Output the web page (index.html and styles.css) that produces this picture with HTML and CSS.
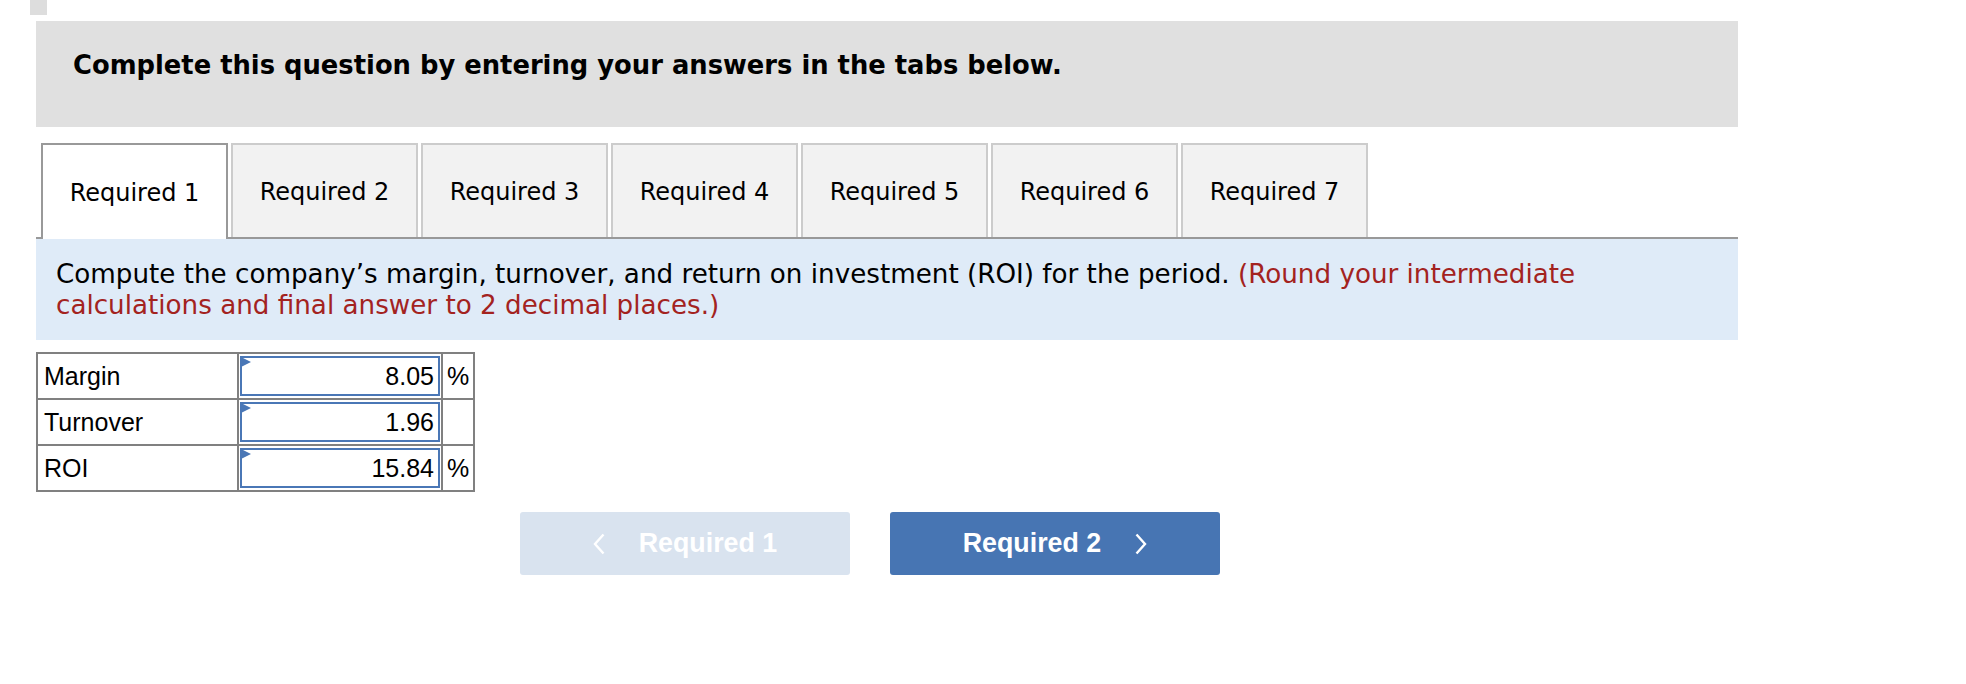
FILE: index.html
```html
<!DOCTYPE html>
<html>
<head>
<meta charset="utf-8">
<link rel="stylesheet" href="styles.css">
</head>
<body>
<div class="corner"></div>
<div class="banner"><h2 class="banner-title">Complete this question by entering your answers in the tabs below.</h2></div>
<div class="tabs">
  <div class="tab active">Required 1</div>
  <div class="tab">Required 2</div>
  <div class="tab">Required 3</div>
  <div class="tab">Required 4</div>
  <div class="tab">Required 5</div>
  <div class="tab">Required 6</div>
  <div class="tab">Required 7</div>
</div>
<div class="prompt">
  <p class="prompt-text">Compute the company’s margin, turnover, and return on investment (ROI) for the period. <span class="hint">(Round your intermediate calculations and final answer to 2 decimal places.)</span></p>
</div>
<table class="answers">
  <tr>
    <td class="label">Margin</td>
    <td class="entry"><div class="field"><span class="flag"></span>8.05</div></td>
    <td class="unit">%</td>
  </tr>
  <tr>
    <td class="label">Turnover</td>
    <td class="entry"><div class="field"><span class="flag"></span>1.96</div></td>
    <td class="unit"></td>
  </tr>
  <tr>
    <td class="label">ROI</td>
    <td class="entry"><div class="field"><span class="flag"></span>15.84</div></td>
    <td class="unit">%</td>
  </tr>
</table>
<div class="nav">
  <div class="btn disabled">
    <svg class="chev" width="12" height="22" viewBox="0 0 12 22"><polyline points="10.5,1.5 2,11 10.5,20.5" fill="none" stroke="#fff" stroke-width="2.4"/></svg>
    <span>Required 1</span>
  </div>
  <div class="btn primary">
    <span>Required 2</span>
    <svg class="chev" width="12" height="22" viewBox="0 0 12 22"><polyline points="1.5,1.5 10,11 1.5,20.5" fill="none" stroke="#fff" stroke-width="2.4"/></svg>
  </div>
</div>
</body>
</html>
```
FILE: styles.css
```css
html, body {
  margin: 0;
  padding: 0;
  background: #ffffff;
}
body {
  width: 1966px;
  height: 684px;
  overflow: hidden;
  font-family: "DejaVu Sans", Verdana, sans-serif;
  color: #000;
}
.corner {
  width: 17px;
  height: 15px;
  margin-left: 30px;
  background: #dddddd;
}
.banner {
  margin: 6px 0 0 36px;
  width: 1702px;
  height: 106px;
  background: #e0e0e0;
  box-sizing: border-box;
  padding: 29px 0 0 37px;
}
.banner-title {
  margin: 0;
  font-size: 25.8px;
  font-weight: bold;
  line-height: 30px;
}
.tabs {
  display: flex;
  gap: 3px;
  margin: 16px 0 0 36px;
  padding-left: 5px;
  width: 1702px;
  box-sizing: border-box;
  border-bottom: 2px solid #999999;
}
.tab {
  width: 187px;
  height: 94px;
  box-sizing: border-box;
  border: 2px solid #cccccc;
  border-bottom: none;
  background: #f2f2f2;
  display: flex;
  align-items: center;
  justify-content: center;
  font-size: 24px;
  padding-top: 1px;
}
.tab.active {
  background: #ffffff;
  border-color: #999999;
  height: 96px;
  margin-bottom: -2px;
}
.prompt {
  margin-left: 36px;
  width: 1702px;
  height: 101px;
  box-sizing: border-box;
  background: #dfebf8;
  padding: 20px 0 0 20px;
}
.prompt-text {
  margin: 0;
  font-size: 26.2px;
  line-height: 31px;
  width: 1570px;
}
.hint {
  color: #a3231f;
}
.answers {
  margin: 12px 0 0 36px;
  border-collapse: collapse;
  font-family: "Liberation Sans", Arial, sans-serif;
  font-size: 25px;
}
.answers td {
  border: 2px solid #808080;
  padding: 0;
  height: 44px;
}
.label {
  width: 193px;
  padding-left: 6px !important;
}
.entry {
  width: 202px;
}
.field {
  position: relative;
  margin: 1px;
  height: 40px;
  border: 2px solid #4a77b6;
  box-sizing: border-box;
  text-align: right;
  padding-right: 4px;
  line-height: 37px;
}
.flag {
  position: absolute;
  left: -1px;
  top: -1px;
  width: 0;
  height: 0;
  border-top: 5px solid transparent;
  border-bottom: 5px solid transparent;
  border-left: 10px solid #4a77b6;
}
.unit {
  width: 30px;
  text-align: center;
}
.nav {
  display: flex;
  gap: 40px;
  margin: 20px 0 0 520px;
}
.btn {
  width: 330px;
  height: 63px;
  border-radius: 3px;
  display: flex;
  align-items: center;
  justify-content: center;
  gap: 34px;
  font-family: "Liberation Sans", Arial, sans-serif;
  font-weight: bold;
  font-size: 26.8px;
  color: #ffffff;
}
.btn.disabled {
  background: #d9e3ef;
}
.btn.primary {
  background: #4775b3;
}
.chev {
  display: block;
}
```
